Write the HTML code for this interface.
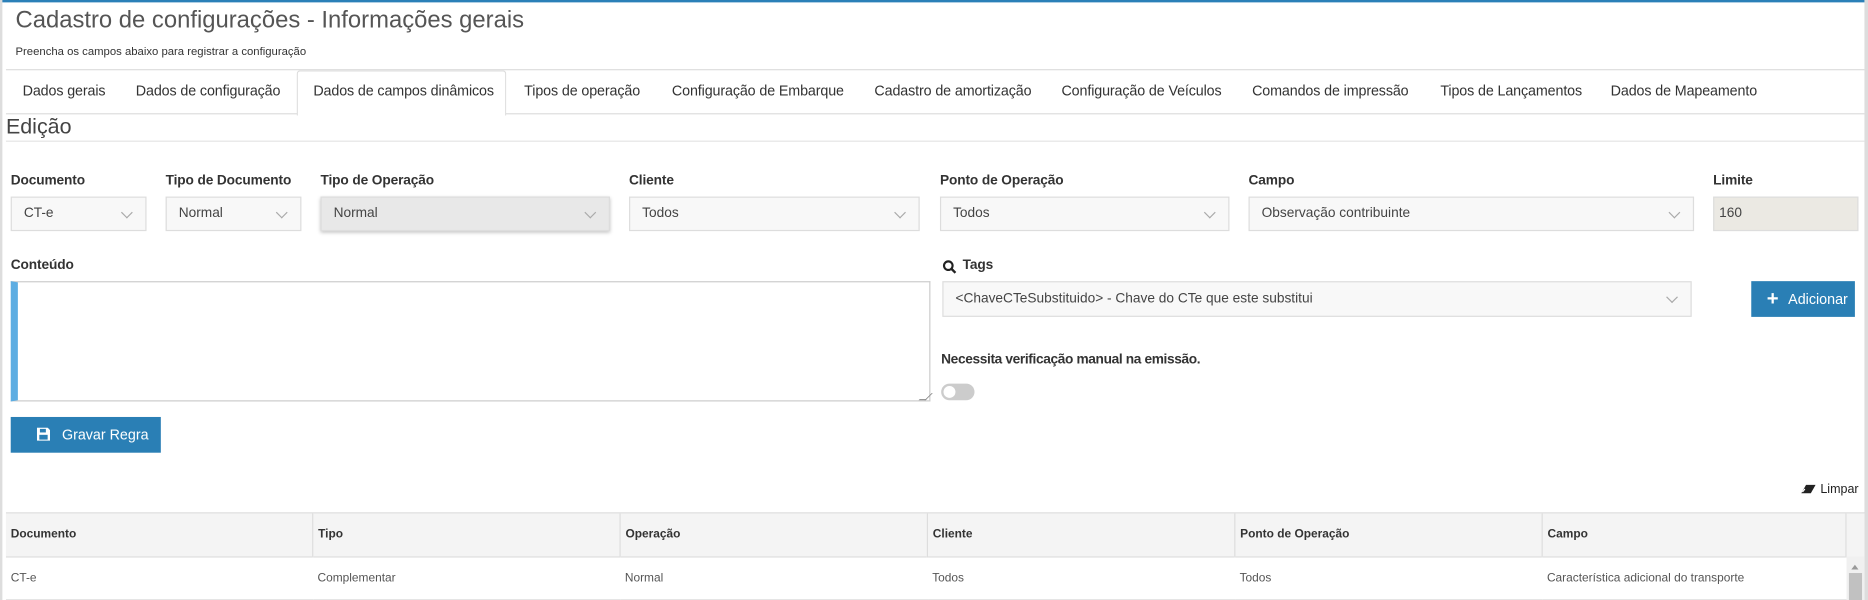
<!DOCTYPE html>
<html><head><meta charset="utf-8"><style>
html,body{margin:0;padding:0;width:1868px;height:600px;overflow:hidden;background:#fff}
#s{position:absolute;left:0;top:0;width:1568px;height:504px;transform:scale(1.19133);transform-origin:0 0;font-family:"Liberation Sans",sans-serif;color:#333}
.a{position:absolute;white-space:nowrap}
.lbl{font-size:11.5px;font-weight:bold;color:#333;letter-spacing:-0.1px}
.sel{position:absolute;border:1px solid #ddd;background:#f8f8f8;box-sizing:border-box;font-size:11.5px;color:#444;padding-left:10px;line-height:27px}
.sel:after{content:"";position:absolute;right:12px;top:9px;width:6px;height:6px;border-right:1.5px solid #aaa;border-bottom:1.5px solid #aaa;transform:rotate(45deg)}
.tab{position:absolute;top:69px;font-size:12px;color:#333;letter-spacing:-0.1px}
.btn{position:absolute;background:#2a7fb5;color:#fff;font-size:12px}
th,td{font-size:10px;text-align:left;padding:0 4px}
</style></head><body><div id="s">
<div class="a" style="left:0;top:0;width:1568px;height:2px;background:#2b80b8"></div>
<div class="a" style="left:0;top:0;width:2px;height:504px;background:#ddd"></div>
<div class="a" style="left:1565px;top:0;width:3px;height:504px;background:#ddd"></div>
<div class="a" style="left:13px;top:6px;font-size:20px;color:#555">Cadastro de configurações - Informações gerais</div>
<div class="a" style="left:13px;top:38px;font-size:9.5px;color:#333">Preencha os campos abaixo para registrar a configuração</div>
<div class="a" style="left:5px;top:58px;width:1560px;height:1px;background:#ddd"></div>
<div class="a" style="left:5px;top:95px;width:1560px;height:1px;background:#ddd"></div>
<div class="a" style="left:249px;top:59px;width:174px;height:37px;background:#fff;border:1px solid #ddd;border-bottom:none;border-radius:3px 3px 0 0"></div>
<div class="tab" style="left:19px">Dados gerais</div>
<div class="tab" style="left:114px">Dados de configuração</div>
<div class="tab" style="left:263px">Dados de campos dinâmicos</div>
<div class="tab" style="left:440px">Tipos de operação</div>
<div class="tab" style="left:564px">Configuração de Embarque</div>
<div class="tab" style="left:734px">Cadastro de amortização</div>
<div class="tab" style="left:891px">Configuração de Veículos</div>
<div class="tab" style="left:1051px">Comandos de impressão</div>
<div class="tab" style="left:1209px">Tipos de Lançamentos</div>
<div class="tab" style="left:1352px">Dados de Mapeamento</div>
<div class="a" style="left:5px;top:96px;font-size:18px;color:#444">Edição</div>
<div class="a" style="left:5px;top:118px;width:1560px;height:1px;background:#e4e4e4"></div>

<div class="a lbl" style="left:9px;top:146px">Documento</div>
<div class="a lbl" style="left:139px;top:146px">Tipo de Documento</div>
<div class="a lbl" style="left:269px;top:146px">Tipo de Operação</div>
<div class="a lbl" style="left:528px;top:146px">Cliente</div>
<div class="a lbl" style="left:789px;top:146px">Ponto de Operação</div>
<div class="a lbl" style="left:1048px;top:146px">Campo</div>
<div class="a lbl" style="left:1438px;top:146px">Limite</div>
<div class="sel" style="left:9px;top:165px;width:114px;height:29px">CT-e</div>
<div class="sel" style="left:139px;top:165px;width:114px;height:29px">Normal</div>
<div class="sel" style="left:269px;top:165px;width:243px;height:29px;background:#e8e8e8;box-shadow:0 1px 3px rgba(0,0,0,.25)">Normal</div>
<div class="sel" style="left:528px;top:165px;width:244px;height:29px">Todos</div>
<div class="sel" style="left:789px;top:165px;width:243px;height:29px">Todos</div>
<div class="sel" style="left:1048px;top:165px;width:374px;height:29px">Observação contribuinte</div>
<div class="a" style="left:1438px;top:165px;width:122px;height:29px;box-sizing:border-box;border:1px solid #ddd;background:#ebe9e3;font-size:11.5px;line-height:27px;padding-left:4px;color:#444">160</div>

<div class="a lbl" style="left:9px;top:217px">Conteúdo</div>
<div class="a" style="left:9px;top:236px;width:772px;height:101px;box-sizing:border-box;border:1px solid #ccc;border-left:6px solid #5dade2"></div>
<div class="a" style="left:774px;top:330px;width:5px;height:5px;border-right:1px solid #888;border-bottom:1px solid #888;transform:skew(-45deg)"></div>
<svg class="a" style="left:791px;top:218px" width="12" height="12" viewBox="0 0 12 12"><circle cx="5" cy="5" r="3.6" fill="none" stroke="#222" stroke-width="1.8"/><path d="M7.6 7.6L11 11" stroke="#222" stroke-width="2"/></svg>
<div class="a lbl" style="left:808px;top:217px">Tags</div>
<div class="sel" style="left:791px;top:236px;width:629px;height:30px;line-height:28px">&lt;ChaveCTeSubstituido&gt; - Chave do CTe que este substitui</div>
<div class="btn" style="left:1470px;top:236px;width:87px;height:30px;line-height:30px"><span style="position:absolute;left:13px;font-size:17px;font-weight:bold">+</span><span style="position:absolute;left:31px">Adicionar</span></div>
<div class="a lbl" style="left:790px;top:296px;letter-spacing:-0.3px">Necessita verificação manual na emissão.</div>
<div class="a" style="left:790px;top:322px;width:28px;height:14px;border-radius:7px;background:#ccc"></div>
<div class="a" style="left:792px;top:324px;width:10px;height:10px;border-radius:5px;background:#fff"></div>
<div class="btn" style="left:9px;top:350px;width:126px;height:30px;line-height:30px">
<svg style="position:absolute;left:22px;top:9px" width="11" height="11" viewBox="0 0 11 11"><path d="M0 0H9L11 2V11H0Z" fill="#fff"/><rect x="2.5" y="1" width="5" height="3" fill="#2a7fb5"/><rect x="2" y="6" width="7" height="4" fill="#2a7fb5"/></svg>
<span style="position:absolute;left:43px">Gravar Regra</span></div>
<svg class="a" style="left:1512px;top:406px" width="12" height="9" viewBox="0 0 12 9"><path d="M4 1H12L8 8H0Z" fill="#222"/><path d="M1 7L3 4.5" stroke="#fff" stroke-width="1"/></svg>
<div class="a" style="left:1528px;top:405px;font-size:10.5px;color:#222">Limpar</div>

<div class="a" style="left:5px;top:430px;width:1561px;height:1px;background:#ddd"></div>
<table class="a" style="left:5px;top:431px;border-collapse:collapse;width:1545px;table-layout:fixed">
<tr style="height:36px;background:#f4f4f4;border-bottom:1px solid #ddd"><th style="width:249px;border-right:1px solid #ddd">Documento</th><th style="width:249px;border-right:1px solid #ddd">Tipo</th><th style="width:249px;border-right:1px solid #ddd">Operação</th><th style="width:249px;border-right:1px solid #ddd">Cliente</th><th style="width:249px;border-right:1px solid #ddd">Ponto de Operação</th><th style="border-right:1px solid #ddd">Campo</th></tr>
<tr style="height:36px;color:#555;border-bottom:1px solid #ddd"><td>CT-e</td><td>Complementar</td><td>Normal</td><td>Todos</td><td>Todos</td><td>Característica adicional do transporte</td></tr>
</table>
<div class="a" style="left:1550px;top:431px;width:15px;height:36px;background:#f4f4f4"></div>
<div class="a" style="left:1550px;top:467px;width:15px;height:37px;background:#f0f0f0"></div>
<div class="a" style="left:1554px;top:474px;width:0;height:0;border:3px solid transparent;border-bottom:4px solid #999;border-top:none"></div>
<div class="a" style="left:1552px;top:481px;width:11px;height:23px;background:#c1c1c1"></div>
</div></body></html>
